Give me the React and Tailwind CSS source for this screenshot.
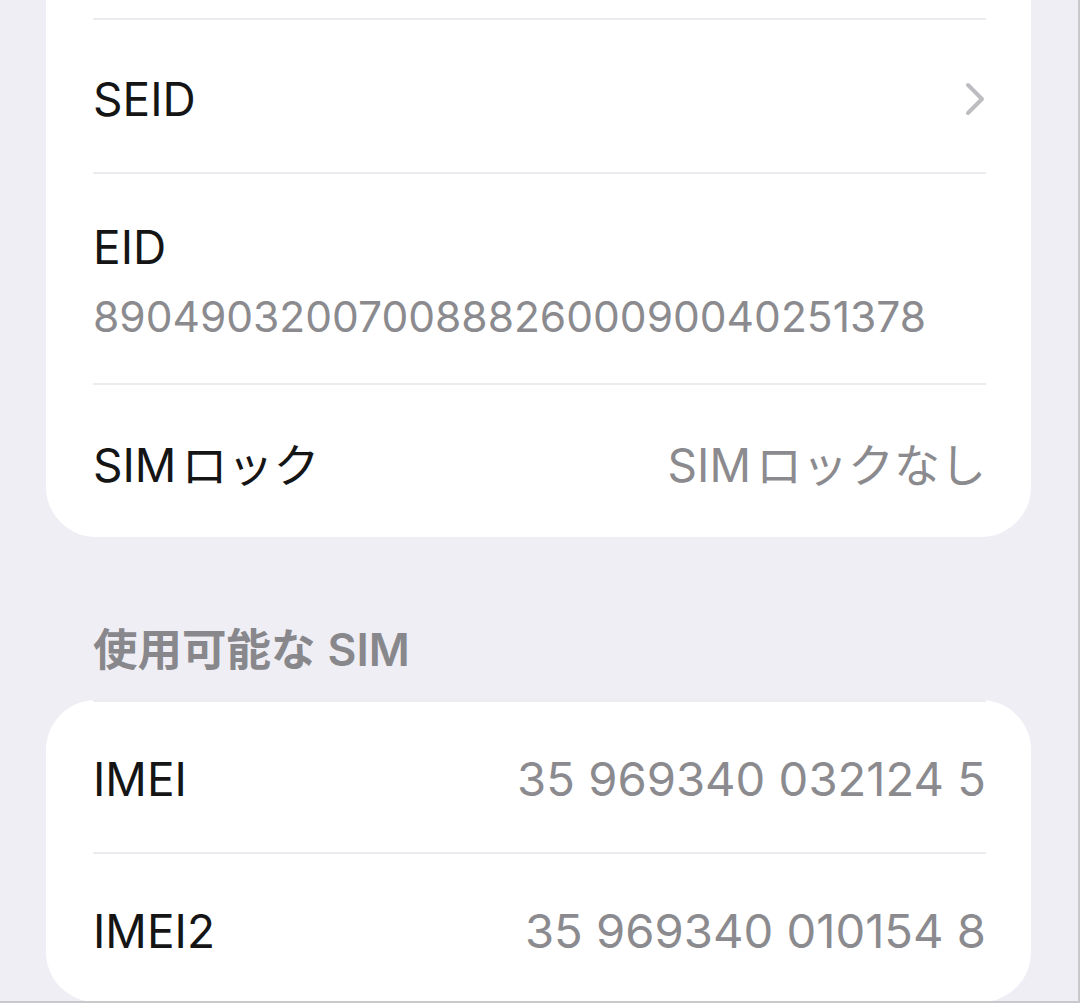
import React from 'react'

const font = { fontFamily: 'Inter, "Noto Sans CJK JP", sans-serif' }

const Chevron = () => (
    <svg width="22" height="34" viewBox="0 0 22 34" fill="none">
        <path d="M4 3 L18 17 L4 31" stroke="#bdbdc1" strokeWidth="4" strokeLinecap="round" strokeLinejoin="round" />
    </svg>
)

const Row = ({ label, value, chevron, className = '' }) => (
    <div className={`flex items-center justify-between border-t-2 border-[#ececf0] ${className}`}>
        <span className="text-[46px] leading-none text-[#151515]">{label}</span>
        {value && <span className="text-[47.2px] leading-none text-[#8b8b8f]">{value}</span>}
        {chevron && <Chevron />}
    </div>
)

const SimLock = ({ tail = '' }) => (
    <>
        SIM<span className="ml-[5px]">ロック{tail}</span>
    </>
)

export default function App() {
    return (
        <div style={font} className="w-[1080px] h-[1003px] overflow-hidden bg-[#efeef4] pl-[46px] pr-[47px] border-r-2 border-b-2 border-[#c9c9cc]">
            {/* top card, continues above the viewport */}
            <div className="bg-white rounded-b-[50px] pl-[47px] pr-[45px]">
                <div className="h-[18px]" />
                <Row label="SEID" chevron className="h-[154px] pt-[6px]" />
                <div className="flex h-[211px] flex-col justify-center gap-[26px] border-t-2 border-[#ececf0] pt-[6px]">
                    <span className="text-[46px] leading-none text-[#151515]">EID</span>
                    <span className="text-[42.5px] leading-none text-[#8b8b8f]">89049032007008882600090040251378</span>
                </div>
                <div className="flex h-[154px] items-center justify-between border-t-2 border-[#ececf0] pt-[8px]">
                    <span className="text-[46px] leading-none text-[#151515]"><SimLock /></span>
                    <span className="text-[46px] leading-none text-[#8b8b8f]"><SimLock tail="なし" /></span>
                </div>
            </div>

            {/* section header */}
            <div className="flex h-[163px] items-end pb-[28px] pl-[47px]">
                <span className="text-[44.5px] font-semibold leading-none text-[#88888c]">
                    使用可能な<span className="ml-[12px]">SIM</span>
                </span>
            </div>

            <div className="bg-white rounded-[50px] pl-[47px] pr-[45px]">
                <Row label="IMEI" value="35 969340 032124 5" className="h-[152px] border-t-0 pt-[4px]" />
                <Row label="IMEI2" value="35 969340 010154 8" className="h-[150px] pt-[6px]" />
            </div>
        </div>
    )
}
